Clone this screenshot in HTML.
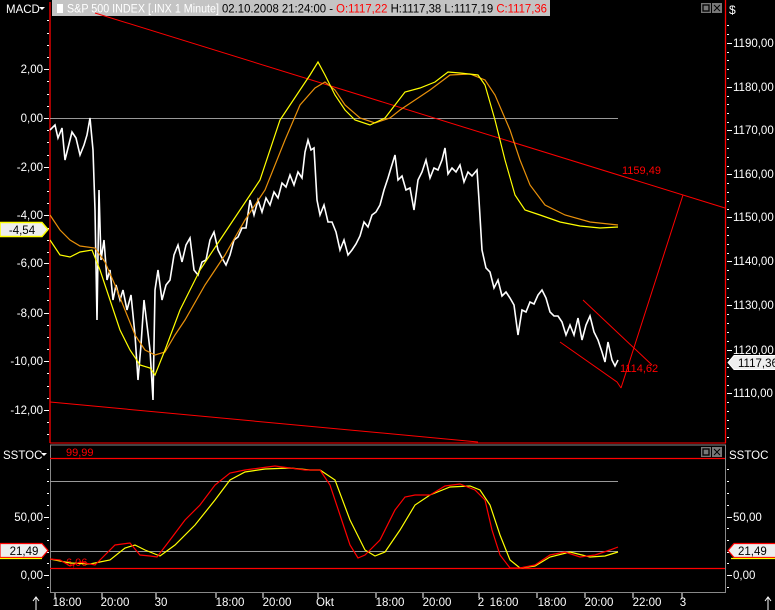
<!DOCTYPE html>
<html><head><meta charset="utf-8"><style>
html,body{margin:0;padding:0;background:#000;width:775px;height:610px;overflow:hidden}
svg{display:block;font-family:"Liberation Sans",sans-serif}
</style></head><body>
<svg width="775" height="610" xmlns="http://www.w3.org/2000/svg">
<rect width="775" height="610" fill="#000"/>
<!-- title bar -->
<rect x="52" y="0" width="498" height="16" fill="#c4c4c4"/>
<rect x="57" y="4" width="6" height="9" fill="#fff"/>
<text x="67" y="12.5" font-size="11.5" fill="#fff" textLength="152" lengthAdjust="spacingAndGlyphs">S&amp;P 500 INDEX [.INX  1 Minute]</text>
<text x="222" y="12.5" font-size="11.5" fill="#000" textLength="325" lengthAdjust="spacingAndGlyphs">02.10.2008 21:24:00 - <tspan fill="#f00">O:1117,22</tspan> H:1117,38 L:1117,19 <tspan fill="#f00">C:1117,36</tspan></text>
<text x="6" y="13" font-size="11.5" fill="#fff">MACD</text>
<path d="M39 7 L45 7 L42 10Z" fill="#fff"/>
<!-- buttons top -->
<rect x="701" y="3" width="10" height="10" fill="#777"/><rect x="703" y="5" width="6" height="6" fill="none" stroke="#000" stroke-width="1.3"/>
<rect x="712" y="3" width="10" height="10" fill="#777"/><path d="M714 5 L720 11 M720 5 L714 11" stroke="#000"/>
<text x="729" y="14" font-size="12" fill="#fff">$</text>
<!-- borders -->
<line x1="50" y1="2" x2="50" y2="443" stroke="#f00" stroke-width="1.3"/>
<line x1="725.5" y1="0" x2="725.5" y2="443" stroke="#f00" stroke-width="1.3"/>
<line x1="50" y1="443" x2="726" y2="443" stroke="#f00"/>
<line x1="50" y1="445" x2="726" y2="445" stroke="#888"/>
<line x1="50.5" y1="445" x2="50.5" y2="592" stroke="#888"/>
<line x1="725.5" y1="445" x2="725.5" y2="592" stroke="#888"/>
<line x1="50" y1="592.5" x2="726" y2="592.5" stroke="#888"/>
<!-- left ticks -->
<g stroke="#fff" stroke-width="1">
<path d="M44 69.5H49 M44 118.5H49 M44 167.5H49 M44 215.5H49 M44 263.5H49 M44 313.5H49 M44 361.5H49 M44 410.5H49"/>
<path d="M47 20.5H49 M47 33.5H49 M47 45.5H49 M47 57.5H49 M47 81.5H49 M47 94.5H49 M47 106.5H49 M47 130.5H49 M47 142.5H49 M47 155.5H49 M47 179.5H49 M47 191.5H49 M47 203.5H49 M47 228.5H49 M47 240.5H49 M47 252.5H49 M47 276.5H49 M47 288.5H49 M47 300.5H49 M47 325.5H49 M47 337.5H49 M47 349.5H49 M47 373.5H49 M47 386.5H49 M47 398.5H49 M47 422.5H49 M47 434.5H49"/>
<path d="M727 43.5H732 M727 87.5H732 M727 130.5H732 M727 174.5H732 M727 217.5H732 M727 261.5H732 M727 305.5H732 M727 350.5H732 M727 393.5H732"/>
<path d="M727 25.5H729 M727 34.5H729 M727 52.5H729 M727 60.5H729 M727 69.5H729 M727 78.5H729 M727 96.5H729 M727 104.5H729 M727 113.5H729 M727 122.5H729 M727 139.5H729 M727 148.5H729 M727 157.5H729 M727 166.5H729 M727 183.5H729 M727 192.5H729 M727 201.5H729 M727 209.5H729 M727 227.5H729 M727 235.5H729 M727 244.5H729 M727 253.5H729 M727 270.5H729 M727 279.5H729 M727 288.5H729 M727 297.5H729 M727 314.5H729 M727 323.5H729 M727 332.5H729 M727 341.5H729 M727 358.5H729 M727 367.5H729 M727 376.5H729 M727 385.5H729 M727 402.5H729 M727 411.5H729 M727 420.5H729 M727 428.5H729 M727 437.5H729"/>
<path d="M44 517.5H49 M44 575.5H49 M47 469.5H49 M47 481.5H49 M47 493.5H49 M47 505.5H49 M47 528.5H49 M47 540.5H49 M47 552.5H49 M47 563.5H49 M47 587.5H49"/>
<path d="M727 517.5H732 M727 575.5H732 M727 469.5H729 M727 481.5H729 M727 493.5H729 M727 505.5H729 M727 528.5H729 M727 540.5H729 M727 552.5H729 M727 563.5H729 M727 587.5H729"/>
<path d="M55 593V598 M102 593V598 M156 593V598 M216 593V598 M263 593V598 M318 593V598 M376 593V598 M423 593V598 M479 593V598 M537 593V598 M585 593V598 M633 593V598 M682 593V598"/>
</g>
<g font-size="11.5" fill="#fff" text-anchor="end">
<text x="43" y="73">2,00</text><text x="43" y="122">0,00</text><text x="43" y="171">-2,00</text><text x="43" y="219">-4,00</text><text x="43" y="267">-6,00</text><text x="43" y="317">-8,00</text><text x="43" y="365">-10,00</text><text x="43" y="414">-12,00</text>
<text x="43" y="521">50,00</text><text x="43" y="579">0,00</text>
</g>
<g font-size="11.5" fill="#fff">
<text x="733" y="47">1190,00</text><text x="733" y="91">1180,00</text><text x="733" y="134">1170,00</text><text x="733" y="178">1160,00</text><text x="733" y="221">1150,00</text><text x="733" y="265">1140,00</text><text x="733" y="309">1130,00</text><text x="733" y="354">1120,00</text><text x="733" y="397">1110,00</text>
<text x="733" y="521">50,00</text><text x="733" y="579">0,00</text>
<text x="729" y="459">SSTOC</text>
<text x="3" y="459">SSTOC</text>
</g>
<path d="M41 453 L47 453 L44 456Z" fill="#fff"/>
<rect x="701" y="447" width="10" height="10" fill="#777"/><rect x="703" y="449" width="6" height="6" fill="none" stroke="#000" stroke-width="1.3"/>
<rect x="712" y="447" width="10" height="10" fill="#777"/><path d="M714 449 L720 455 M720 449 L714 455" stroke="#000"/>
<g font-size="11.5" fill="#fff" text-anchor="middle">
<text x="67" y="606">18:00</text><text x="115" y="606">20:00</text><text x="161" y="606">30</text><text x="230" y="606">18:00</text><text x="277" y="606">20:00</text><text x="325" y="606">Okt</text><text x="390" y="606">18:00</text><text x="437" y="606">20:00</text><text x="481" y="606">2</text><text x="504" y="606">16:00</text><text x="552" y="606">18:00</text><text x="599" y="606">20:00</text><text x="647" y="606">22:00</text><text x="683" y="606">3</text>
</g>
<path d="M36 610V598 M33 601L36 597L39 601 M768 610V598 M765 601L768 597L771 601" stroke="#fff" fill="none"/>
<!-- upper grid/lines -->
<line x1="50" y1="118.5" x2="618" y2="118.5" stroke="#999"/>
<line x1="95" y1="13" x2="725" y2="208" stroke="#f00"/>
<line x1="50" y1="402" x2="478" y2="442" stroke="#f00"/>
<path d="M621 388 L683 195 M583 300 L652 365 M560 342 L617 382 L621 388" stroke="#f00" fill="none"/>
<text x="622" y="174" font-size="11" fill="#f00">1159,49</text>
<text x="620" y="372" font-size="11" fill="#f00">1114,62</text>
<!-- price -->
<polyline fill="none" stroke="#fff" stroke-width="1.6" points="50,130 55,125 58,138 62,128 65,160 68,148 72,132 76,138 80,155 84,145 87,135 90,118 93,150 95,210 97,320 99,190 101,260 104,240 107,280 110,270 113,300 116,285 120,300 123,290 127,310 131,295 135,335 138,380 141,345 144,300 147,325 150,350 153,400 155,290 158,270 162,300 166,285 170,280 174,255 178,245 182,262 186,245 190,238 194,270 198,275 202,262 206,260 210,240 214,232 218,250 222,258 226,265 230,255 234,240 238,237 242,228 246,228 250,200 254,215 258,200 262,212 266,198 270,205 274,192 278,198 282,183 286,187 290,175 294,185 298,172 302,178 305,152 308,140 311,150 314,148 317,200 320,215 324,205 328,222 332,222 336,232 340,250 344,240 348,255 352,250 356,244 360,236 364,222 368,227 372,215 376,212 380,205 384,190 388,178 391,168 395,155 398,180 402,176 406,190 410,188 414,210 418,180 422,172 426,160 430,178 434,168 438,170 442,160 445,148 448,174 452,168 456,172 460,165 464,182 468,172 472,176 477,170 479,200 482,250 486,268 490,272 494,288 498,280 502,296 506,292 510,298 514,305 518,335 522,310 526,312 530,302 534,304 538,295 542,290 546,298 550,312 554,316 558,316 562,322 566,335 570,325 574,335 578,318 582,340 586,325 590,316 594,332 598,340 602,352 605,362 608,342 612,360 615,366 618,360"/>
<!-- macd -->
<polyline fill="none" stroke="#e8900a" stroke-width="1.2" points="50,215 60,230 70,240 80,246 95,248 105,262 115,285 125,310 135,335 145,350 155,355 165,352 175,335 185,320 205,285 225,255 245,220 265,190 285,140 300,105 315,88 325,82 335,90 345,105 360,118 375,123 390,118 400,110 415,100 430,90 450,75 470,74 485,80 495,95 510,130 520,160 530,185 545,205 565,215 590,222 618,225"/>
<polyline fill="none" stroke="#ff0" stroke-width="1.2" points="50,240 60,255 70,257 80,252 92,250 100,270 110,300 120,330 130,350 140,365 150,368 155,375 165,350 180,310 200,270 220,240 240,210 260,180 280,120 300,90 310,75 318,62 325,75 335,95 345,110 355,120 370,125 385,118 395,105 405,92 420,88 435,82 448,72 460,73 478,75 485,85 495,120 505,160 515,195 525,210 540,215 560,222 580,226 600,228 618,227"/>
<!-- lower panel -->
<line x1="50" y1="458.5" x2="725" y2="458.5" stroke="#f00" stroke-width="1.3"/>
<line x1="50" y1="568.5" x2="725" y2="568.5" stroke="#f00" stroke-width="1.3"/>
<line x1="50" y1="481.5" x2="618" y2="481.5" stroke="#999"/>
<line x1="50" y1="551.5" x2="618" y2="551.5" stroke="#999"/>
<text x="66" y="456" font-size="11" fill="#f00">99,99</text>
<text x="66" y="566" font-size="11" fill="#f00">6,06</text>
<polyline fill="none" stroke="#ff0" stroke-width="1.2" points="50,559 70,563 90,564 110,560 125,548 135,545 145,550 160,556 175,545 195,525 215,500 230,480 245,472 265,469 290,468 310,470 320,470 335,480 350,520 365,550 375,556 385,552 400,530 415,505 430,495 450,487 470,486 480,490 490,505 500,535 510,560 520,568 535,566 550,557 570,552 590,557 605,556 618,552"/>
<polyline fill="none" stroke="#f00" stroke-width="1.2" points="50,559 60,560 70,566 80,562 95,565 100,560 115,545 130,543 140,555 150,556 157,557 170,540 185,520 200,505 215,485 230,473 245,470 260,468 275,466 290,468 305,470 320,470 330,485 340,515 350,545 358,558 365,555 380,540 395,510 405,497 415,495 430,495 445,486 460,484 475,490 485,500 492,530 500,555 510,568 520,568 535,565 550,555 565,552 580,557 595,555 610,550 618,547"/>
<!-- value labels -->
<path d="M0 222.5 H42 L48 229.5 L42 236.5 H0Z" fill="#eee" stroke="#ff0" stroke-width="1.5"/>
<text x="22" y="234" font-size="11.5" fill="#000" text-anchor="middle">-4,54</text>
<path d="M0 543.5 H42 L48 550.5 L42 557.5 H0Z" fill="#eee" stroke="#f00" stroke-width="1.2"/>
<line x1="0" y1="558.5" x2="42" y2="558.5" stroke="#ff0" stroke-width="1.2"/>
<text x="24" y="555" font-size="11.5" fill="#000" text-anchor="middle">21,49</text>
<path d="M775 355.5 H734 L728 362.5 L734 369.5 H775" fill="#eee" stroke="#fff"/>
<text x="738" y="367" font-size="11.5" fill="#000">1117,36</text>
<path d="M775 543.5 H734 L728 550.5 L734 557.5 H775" fill="#eee" stroke="#f00" stroke-width="1.2"/>
<line x1="731" y1="558.5" x2="775" y2="558.5" stroke="#ff0" stroke-width="1.2"/>
<text x="738" y="555" font-size="11.5" fill="#000">21,49</text>
</svg>
</body></html>
